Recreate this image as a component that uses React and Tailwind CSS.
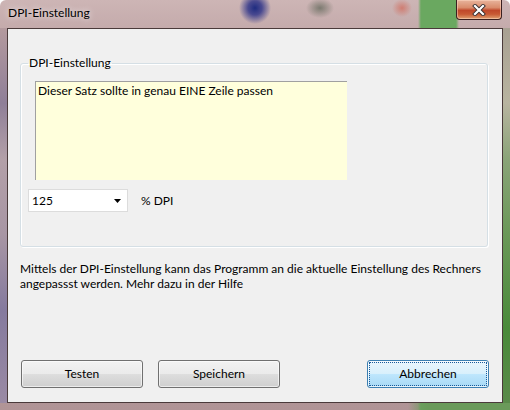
import React from "react";

const font = { fontFamily: '"Segoe UI", Lato, "Noto Sans", sans-serif' };

function WinButton({ children, isDefault }) {
  if (isDefault) {
    return (
      <div className="w-[122px] h-[28px] rounded-[3px] border border-[#3c7fb1] p-[1px] bg-[linear-gradient(to_bottom,#eaf6fd_0%,#d9f0fc_48%,#bee6fd_52%,#a7d9f5_100%)] shadow-[inset_0_0_0_1px_rgba(255,255,255,0.7)]">
        <div className="w-full h-full border border-dotted border-[#1a5a9a] flex items-center justify-center text-[12px] text-black">
          {children}
        </div>
      </div>
    );
  }
  return (
    <div className="w-[122px] h-[28px] rounded-[3px] border border-[#707070] flex items-center justify-center text-[12px] text-black bg-[linear-gradient(to_bottom,#f2f2f2_0%,#ebebeb_48%,#dddddd_52%,#cfcfcf_100%)] shadow-[inset_0_0_0_1px_rgba(255,255,255,0.6)]">
      {children}
    </div>
  );
}

export default function App() {
  return (
    <div
      className="w-[510px] h-[410px] flex flex-col rounded-t-[6px] overflow-hidden bg-[radial-gradient(circle_at_255px_8px,#1f2c80_0px,#4a4a90_7px,rgba(160,140,170,0)_16px),radial-gradient(ellipse_14px_10px_at_320px_8px,#7c7a70_0%,rgba(124,122,112,0)_100%),radial-gradient(ellipse_10px_9px_at_402px_8px,#cf7d72_0%,rgba(207,125,114,0)_100%),linear-gradient(to_right,rgba(0,0,0,0)_418px,#6aa860_421px,#6aa860_456px,rgba(0,0,0,0)_459px),linear-gradient(to_bottom,#cdb5b5_0%,#c3a9aa_8%,#b99d9e_60%,#b09496_100%)]"
      style={font}
    >
      {/* title bar */}
      <div className="h-[28px] flex items-start shrink-0">
        <div className="pl-[8px] pt-[5px] text-[12px] text-black leading-[16px] [text-shadow:0_0_6px_rgba(255,255,255,0.9)]">
          DPI-Einstellung
        </div>
        <div className="ml-auto mr-[8px] w-[46px] h-[20px] rounded-b-[4px] border border-t-0 border-[#3a2020] overflow-hidden bg-[linear-gradient(to_bottom,#e8b49c_0%,#d98c6c_40%,#c0482a_55%,#c85a34_75%,#e0a070_100%)] flex items-center justify-center shadow-[inset_0_0_0_1px_rgba(255,220,200,0.5)]">
          <svg width="14" height="12" viewBox="0 0 14 12">
            <path d="M3 2 L11 10 M11 2 L3 10" stroke="#3a3030" strokeWidth="4" strokeLinecap="square" fill="none" />
            <path d="M3 2 L11 10 M11 2 L3 10" stroke="#ffffff" strokeWidth="2.2" strokeLinecap="square" fill="none" />
          </svg>
        </div>
      </div>

      {/* middle row: left frame, client, right frame */}
      <div className="flex h-[375px] shrink-0">
        <div className="w-[7px] bg-[linear-gradient(to_bottom,#b49a9e_0%,#8f7f98_20%,#b3a0a8_35%,#a896a4_55%,#857a9e_75%,#9a8aa4_100%)]" />
        <div className="w-[496px] border border-[#4a3a3a] bg-[#f0f0f0] flex flex-col">
          <fieldset className="ml-[12px] mt-[27px] w-[468px] h-[191px] border border-[#d5dfe5] rounded-[3px] shadow-[inset_1px_1px_0_#ffffff,1px_1px_0_#ffffff] px-[14px]">
            <legend className="ml-[-7px] px-[1px] text-[12px] leading-[14px] text-black">DPI-Einstellung</legend>
            <div className="mt-[11px] w-[312px] h-[99px] bg-[#ffffdc] border-t border-l border-[#a0a0a0] px-[2px] pt-[1px] text-[12px] leading-[16px] text-black">
              Dieser Satz sollte in genau EINE Zeile passen
            </div>
            <div className="mt-[9px] ml-[-7px] flex items-center">
              <div className="w-[100px] h-[23px] bg-white border border-[#dcdcdc] flex items-center pl-[3px] pr-[6px] text-[12px] text-black">
                <span>125</span>
                <svg className="ml-auto" width="7" height="4" viewBox="0 0 7 4">
                  <path d="M0 0 H7 L3.5 4 Z" fill="#000" />
                </svg>
              </div>
              <span className="ml-[13px] text-[12px] text-black">% DPI</span>
            </div>
          </fieldset>

          <div className="ml-[12px] mt-[14px] text-[12px] leading-[15px] text-black whitespace-nowrap">
            <div>Mittels der DPI-Einstellung kann das Programm an die aktuelle Einstellung des Rechners</div>
            <div>angepassst werden. Mehr dazu in der Hilfe</div>
          </div>

          <div className="mt-auto mb-[14px] mx-[13px] flex items-center gap-[15px]">
            <WinButton>Testen</WinButton>
            <WinButton>Speichern</WinButton>
            <div className="ml-auto">
              <WinButton isDefault>Abbrechen</WinButton>
            </div>
          </div>
        </div>
        <div className="w-[7px] bg-[linear-gradient(to_bottom,#a8a092_0%,#b8b4a0_20%,#8aa478_35%,#6a9858_55%,#4a8a3a_80%,#5a8a4a_100%)]" />
      </div>

      {/* bottom frame */}
      <div className="flex-1 bg-[linear-gradient(to_right,rgba(0,0,0,0)_0%,rgba(0,0,0,0)_80%,#6a9a5a_84%,#6a9a5a_100%)]" />
    </div>
  );
}
